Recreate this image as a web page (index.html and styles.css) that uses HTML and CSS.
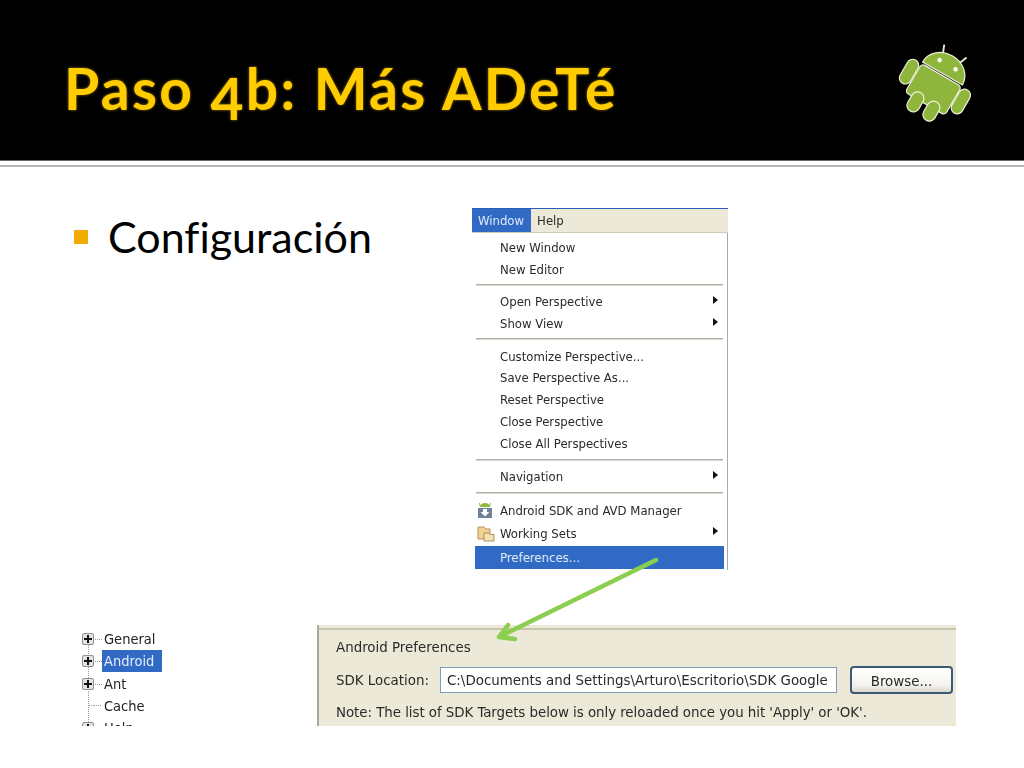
FILE: index.html
```html
<!DOCTYPE html>
<html lang="es">

<head>
    <meta charset="UTF-8">
    <title>Paso 4b: Más ADeTé</title>
    <link rel="stylesheet" href="styles.css">
</head>

<body>
    <div class="slide">
        <header class="top">
            <h1>Paso <span class="four">4</span>b: Más ADeTé</h1>
            <svg class="droid" width="90" height="90" viewBox="-45 -45 90 90">
                <g transform="rotate(30) scale(.92)" fill="#8fb63c" stroke="#eef2dc" stroke-width="1.3">
                    <line x1="-10" y1="-30" x2="-14" y2="-40" stroke="#e8eed0" stroke-width="2"/>
                    <line x1="10" y1="-30" x2="14" y2="-40" stroke="#e8eed0" stroke-width="2"/>
                    <path d="M-25 -12 A25 22 0 0 1 25 -12 Z"/>
                    <rect x="-25" y="-10" width="50" height="36" rx="4"/>
                    <rect x="-39" y="-10" width="13" height="29" rx="6.5"/>
                    <rect x="26" y="-10" width="13" height="29" rx="6.5"/>
                    <rect x="-17" y="18" width="14" height="23" rx="7"/>
                    <rect x="3" y="18" width="14" height="23" rx="7"/>
                    <circle cx="-10" cy="-23" r="2.4" fill="#fff" stroke="none"/>
                    <circle cx="10" cy="-23" r="2.4" fill="#fff" stroke="none"/>
                </g>
            </svg>
        </header>
        <div class="rule"></div>

        <ul class="points">
            <li>Configuración</li>
        </ul>

        <div class="menu shot">
            <div class="menubar">
                <span class="on">Window</span>
                <span>Help</span>
            </div>
            <div class="items">
                <div class="row">New Window</div>
                <div class="row">New Editor</div>
                <div class="sep first"></div>
                <div class="row sub">Open Perspective</div>
                <div class="row sub">Show View</div>
                <div class="sep"></div>
                <div class="row">Customize Perspective...</div>
                <div class="row">Save Perspective As...</div>
                <div class="row">Reset Perspective</div>
                <div class="row">Close Perspective</div>
                <div class="row">Close All Perspectives</div>
                <div class="sep"></div>
                <div class="row sub">Navigation</div>
                <div class="sep"></div>
                <div class="row tall">
                    <svg class="ico" width="16" height="18" viewBox="0 0 16 18">
                        <path d="M3 5 L2.5 2 M13 5 L13.5 2" stroke="#8fb63c" fill="none"/>
                        <path d="M3 6 A5 4 0 0 1 13 6 Z" fill="#8fb63c"/>
                        <rect x="1" y="7" width="14" height="10" fill="#6f8296"/>
                        <path d="M6 8 H10 V11 H12.5 L8 15.5 L3.5 11 H6 Z" fill="#fff"/>
                    </svg>
                    Android SDK and AVD Manager
                </div>
                <div class="row tall sub">
                    <svg class="ico" width="18" height="18" viewBox="0 0 18 18">
                        <path d="M1 3 H7 L9 5 H13 V15 H1 Z" fill="#f0d190" stroke="#b8925a"/>
                        <path d="M7 9 H12 L13 10.5 H17 V17 H7 Z" fill="#f6e2b0" stroke="#a8905e"/>
                    </svg>
                    Working Sets
                </div>
                <div class="row pick">Preferences...</div>
            </div>
        </div>

        <div class="tree shot">
            <div class="node"><i class="plus"></i><span>General</span></div>
            <div class="node"><i class="plus"></i><span class="on">Android</span></div>
            <div class="node"><i class="plus"></i><span>Ant</span></div>
            <div class="node"><i class="dots"></i><span>Cache</span></div>
            <div class="node"><i class="plus"></i><span>Help</span></div>
        </div>

        <div class="prefs shot">
            <div class="prefs-title">Android Preferences</div>
            <div class="sdk">
                <label>SDK Location:</label>
                <div class="path">C:\Documents and Settings\Arturo\Escritorio\SDK Google</div>
                <div class="browse">Browse...</div>
            </div>
            <div class="note">Note: The list of SDK Targets below is only reloaded once you hit 'Apply' or 'OK'.</div>
        </div>

        <svg class="arrow" width="1024" height="768" viewBox="0 0 1024 768">
            <path d="M656 560 L499 637 M508 625 L499 637 L515 639" fill="none" stroke="#8ccf50" stroke-width="4.5" stroke-linecap="round" stroke-linejoin="round"/>
        </svg>
    </div>
</body>

</html>
```

FILE: styles.css
```css
* {
    margin: 0;
    padding: 0;
    box-sizing: border-box;
    list-style: none;
}

body {
    background: #fff;
}

.slide {
    position: relative;
    width: 1024px;
    height: 768px;
    overflow: hidden;
    font-family: "Lato", "Open Sans", sans-serif;
}

.top {
    height: 161px;
    background: #000;
    border-bottom: 1px solid #666;
    display: flex;
    justify-content: space-between;
    align-items: center;
    padding: 0 42px 0 64px;
}

.top h1 {
    font-size: 57px;
    font-weight: 700;
    letter-spacing: 2.3px;
    color: #fc0;
    text-shadow: 0 0 3px rgba(255, 190, 0, .6);
    margin-top: 15px;
}

.top .four {
    position: relative;
    top: 10px;
}

.droid {
    margin-top: 6px;
}

.rule {
    height: 2px;
    margin-top: 4px;
    background: #b5b5b5;
}

.points {
    padding: 40px 0 0 74px;
}

.points li {
    display: flex;
    align-items: center;
    gap: 20px;
    font-size: 43px;
    font-variant-ligatures: none;
    line-height: 60px;
    color: #000;
}

.points li::before {
    content: "";
    width: 14px;
    height: 14px;
    background: #f2ab00;
}

/* pasted screenshots, placed freely on the slide */
.shot {
    position: absolute;
    font-family: "DejaVu Sans Condensed", "DejaVu Sans", sans-serif;
    font-size: 13px;
    color: #2a2a2a;
    overflow: hidden;
    filter: blur(.35px);
}

.menu {
    left: 472px;
    top: 208px;
    width: 256px;
    height: 362px;
}

.menubar {
    display: flex;
    height: 25px;
    line-height: 24px;
    background: #ece9d8;
    border-top: 1px solid #2a5cb8;
    border-bottom: 1px solid #cfccbc;
}

.menubar span {
    padding: 0 6px;
}

.menubar .on {
    padding-right: 7px;
    background: #316ac5;
    color: #dfe8f8;
}

.items {
    height: 337px;
    padding-top: 3px;
    padding-right: 3px;
    border-right: 1px solid #a8a8a8;
}

.row {
    position: relative;
    height: 21.9px;
    line-height: 24px;
    padding-left: 28px;
}

.row.tall {
    height: 23.5px;
    line-height: 25px;
}

.row.sub::after {
    content: "";
    position: absolute;
    right: 6px;
    top: 6px;
    border-left: 5px solid #111;
    border-top: 4px solid transparent;
    border-bottom: 4px solid transparent;
}

.row .ico {
    position: absolute;
    left: 5px;
    top: 3px;
}

.row.pick {
    height: 23px;
    line-height: 23px;
    margin-top: 1px;
    margin-left: 3px;
    padding-left: 25px;
    background: #316ac5;
    color: #dfe8f8;
}

.sep {
    height: 11px;
    margin: 0 1px 0 4px;
    background: linear-gradient(#b0afa6, #b0afa6) center / 100% 1.5px no-repeat;
}

.sep.first {
    height: 10px;
}

.tree {
    left: 82px;
    top: 628px;
    width: 120px;
    height: 98px;
    font-size: 14.5px;
    color: #222;
}

.tree::before {
    content: "";
    position: absolute;
    left: 6px;
    top: 12px;
    bottom: 0;
    border-left: 1px dotted #999;
}

.node {
    display: flex;
    align-items: center;
    height: 22.3px;
    gap: 8px;
}

.node span {
    padding: 0 8px 0 2px;
    line-height: 22px;
}

.node .on {
    background: #316ac5;
    color: #e6edfa;
}

.node i {
    position: relative;
    flex: none;
    width: 12px;
    height: 12px;
}

.node i::after {
    content: "";
    position: absolute;
    left: 12px;
    top: 5px;
    width: 7px;
    border-top: 1px dotted #999;
}

.plus {
    border: 1px solid #8a8f98;
    border-radius: 2px;
    background:
        linear-gradient(#111, #111) center / 8px 2px no-repeat,
        linear-gradient(#111, #111) center / 2px 8px no-repeat,
        #e4e4de;
}

.plus::after {
    left: 11px;
    top: 4px;
}

.dots::before {
    content: "";
    position: absolute;
    left: 7px;
    top: 5px;
    width: 5px;
    border-top: 1px dotted #999;
}

.prefs {
    left: 317px;
    top: 625px;
    width: 639px;
    height: 101px;
    background: #ece9d8;
    border-left: 2px solid #a9a89c;
    padding: 10px 0 0 17px;
    font-size: 14.9px;
    color: #2a2a2a;
}

.prefs::before {
    content: "";
    position: absolute;
    left: 0;
    right: 0;
    top: 3px;
    height: 2px;
    background: #c9c6ad;
}

.prefs-title {
    line-height: 24px;
}

.sdk {
    display: flex;
    align-items: center;
    margin-top: 7px;
    height: 28px;
}

.sdk label {
    width: 104px;
}

.path {
    width: 397px;
    height: 26px;
    line-height: 24px;
    padding-left: 6px;
    background: #fff;
    border: 1px solid #7f9db9;
    white-space: nowrap;
    overflow: hidden;
}

.browse {
    width: 103px;
    height: 28px;
    line-height: 26px;
    margin-left: 13px;
    text-align: center;
    background: linear-gradient(#fff, #f4f3ee 70%, #dcd8c8);
    border: 2px solid #3c5a78;
    border-radius: 4px;
}

.note {
    margin-top: 6px;
    line-height: 24px;
    letter-spacing: -.05px;
    white-space: nowrap;
}

.arrow {
    position: absolute;
    left: 0;
    top: 0;
    pointer-events: none;
}
```
